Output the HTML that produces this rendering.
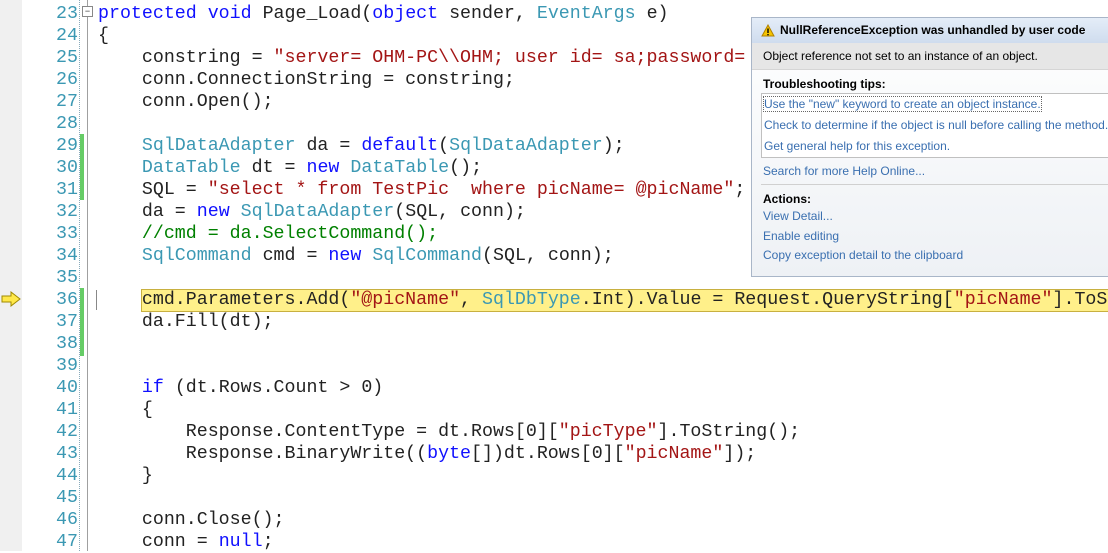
<html><head><style>
body{margin:0;width:1108px;height:551px;overflow:hidden;background:#fff;position:relative;font-family:"Liberation Mono",monospace}
.lm{position:absolute;left:0;top:0;width:22px;height:551px;background:#f0f0f0}
.ln{position:absolute;left:22px;width:56px;text-align:right;color:#3b98b3;font-size:18.3px;line-height:22px}
.c{position:absolute;left:98px;white-space:pre;font-size:18.3px;line-height:22px;color:#222}
.k{color:#1010ff}.t{color:#3b98b3}.s{color:#a31515}.g{color:#008000}
.pop{position:absolute;left:751px;top:17px;width:360px;height:258px;border:1px solid #a9b6c8;background:linear-gradient(#fff,#eef1f5);font-family:"Liberation Sans",sans-serif;font-size:12px;color:#000}
.pop a{color:#3a6fb0;text-decoration:none}
</style></head><body>
<div class="lm"></div>
<div style="position:absolute;left:79px;top:0;height:551px;border-left:1px dotted #8ab"></div>
<div style="position:absolute;left:87px;top:0;height:551px;border-left:1px solid #a0a0a0"></div>
<div style="position:absolute;left:80px;top:134px;width:4px;height:66px;background:#6c6"></div>
<div style="position:absolute;left:80px;top:288px;width:4px;height:68px;background:#6c6"></div>
<div style="position:absolute;left:82px;top:6px;width:9px;height:9px;border:1px solid #888;background:#fff;font:9px/9px 'Liberation Sans';text-align:center;color:#333">−</div>
<div style="position:absolute;left:96px;top:290px;height:20px;border-left:1px solid #888"></div>
<svg style="position:absolute;left:0;top:291px" width="22" height="16"><path d="M2 5h9V1l9 7-9 7v-4H2z" fill="#ffe84a" stroke="#a08a00" stroke-width="1"/></svg>
<div style="position:absolute;left:141px;top:289px;width:980px;height:21px;background:#fff08a;border:1px solid #c8b040"></div>
<div class="c" style="top:3px"><span class="k">protected void</span> Page_Load(<span class="k">object</span> sender, <span class="t">EventArgs</span> e)
{
    constring = <span class="s">"server= OHM-PC\\OHM; user id= sa;password=</span>
    conn.ConnectionString = constring;
    conn.Open();

    <span class="t">SqlDataAdapter</span> da = <span class="k">default</span>(<span class="t">SqlDataAdapter</span>);
    <span class="t">DataTable</span> dt = <span class="k">new</span> <span class="t">DataTable</span>();
    SQL = <span class="s">"select * from TestPic  where picName= @picName"</span>;
    da = <span class="k">new</span> <span class="t">SqlDataAdapter</span>(SQL, conn);
    <span class="g">//cmd = da.SelectCommand();</span>
    <span class="t">SqlCommand</span> cmd = <span class="k">new</span> <span class="t">SqlCommand</span>(SQL, conn);

    cmd.Parameters.Add(<span class="s">"@picName"</span>, <span class="t">SqlDbType</span>.Int).Value = Request.QueryString[<span class="s">"picName"</span>].ToS
    da.Fill(dt);


    <span class="k">if</span> (dt.Rows.Count &gt; 0)
    {
        Response.ContentType = dt.Rows[0][<span class="s">"picType"</span>].ToString();
        Response.BinaryWrite((<span class="k">byte</span>[])dt.Rows[0][<span class="s">"picName"</span>]);
    }

    conn.Close();
    conn = <span class="k">null</span>;</div>
<div class="ln" style="top:3px">23<br>24<br>25<br>26<br>27<br>28<br>29<br>30<br>31<br>32<br>33<br>34<br>35<br>36<br>37<br>38<br>39<br>40<br>41<br>42<br>43<br>44<br>45<br>46<br>47</div>
<div class="pop">
<div style="height:25px;background:linear-gradient(#e4edf8,#cfdcee);line-height:25px;font-weight:bold;padding-left:28px;position:relative"><svg style="position:absolute;left:9px;top:6px" width="14" height="13"><path d="M7 1L13 12H1z" fill="#f5c400" stroke="#b08000"/><rect x="6.3" y="4.5" width="1.4" height="4.5" fill="#000"/><rect x="6.3" y="10" width="1.4" height="1.3" fill="#000"/></svg>NullReferenceException was unhandled by user code</div>
<div style="height:26px;background:#e6e6e6;line-height:26px;padding-left:11px;border-bottom:1px solid #d5d5d5">Object reference not set to an instance of an object.</div>
<div style="padding-left:11px;font-weight:bold;margin-top:7px;line-height:14px">Troubleshooting tips:</div>
<div style="margin:2px 0 0 9px;border:1px solid #c0c0c0;background:#fff;height:63px;line-height:21px;padding-left:2px"><a style="outline:1px dotted #666">Use the "new" keyword to create an object instance.</a><br><a>Check to determine if the object is null before calling the method.</a><br><a>Get general help for this exception.</a></div>
<div style="padding-left:11px;line-height:26px"><a>Search for more Help Online...</a></div>
<div style="border-top:1px solid #d0d0d0;margin:0 0 0 9px"></div>
<div style="padding-left:11px;font-weight:bold;margin-top:6px;line-height:16px">Actions:</div>
<div style="padding-left:11px;line-height:19.5px"><a>View Detail...</a><br><a>Enable editing</a><br><a>Copy exception detail to the clipboard</a></div>
</div>
</body></html>
